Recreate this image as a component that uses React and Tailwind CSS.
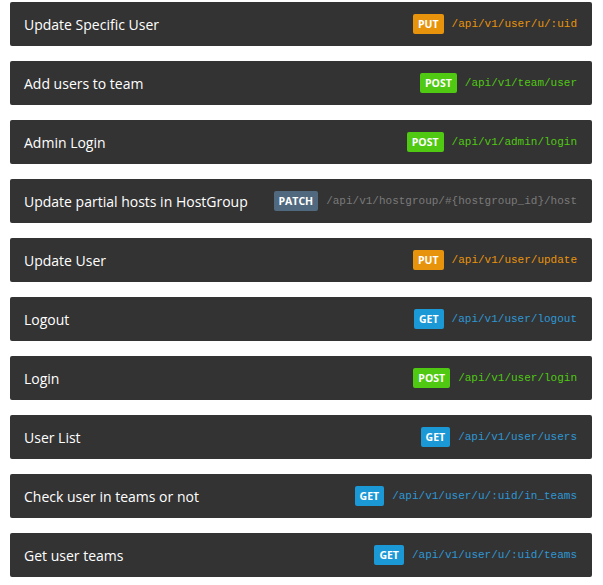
import React from "react";

const rows = [
  ["Update Specific User", "PUT", "/api/v1/user/u/:uid"],
  ["Add users to team", "POST", "/api/v1/team/user"],
  ["Admin Login", "POST", "/api/v1/admin/login"],
  ["Update partial hosts in HostGroup", "PATCH", "/api/v1/hostgroup/#{hostgroup_id}/host"],
  ["Update User", "PUT", "/api/v1/user/update"],
  ["Logout", "GET", "/api/v1/user/logout"],
  ["Login", "POST", "/api/v1/user/login"],
  ["User List", "GET", "/api/v1/user/users"],
  ["Check user in teams or not", "GET", "/api/v1/user/u/:uid/in_teams"],
  ["Get user teams", "GET", "/api/v1/user/u/:uid/teams"],
];

const badge = {
  PUT: "bg-[#e8930c]",
  POST: "bg-[#4fc912]",
  GET: "bg-[#1b98d6]",
  PATCH: "bg-[#50697e]",
};
const pathColor = {
  PUT: "text-[#e8930c]",
  POST: "text-[#4fc912]",
  GET: "text-[#2e97d5]",
  PATCH: "text-[#7a7a7a]",
};

export default function App() {
  return (
    <div className="bg-white w-[603px] h-[585px] pt-[2px] px-[10px] flex flex-col gap-[15px] font-['Open_Sans',sans-serif]">
      {rows.map(([title, method, path]) => (
        <div
          key={title}
          className="h-[44px] w-[582px] bg-[#333333] rounded-[2px] flex items-center pl-[14px] pr-[15px]"
        >
          <span className="text-white text-[14px] flex-1 whitespace-nowrap">{title}</span>
          <span
            className={`${badge[method]} text-white font-bold text-[10.5px] leading-[20px] h-[20px] px-[5px] rounded-[2px] font-['Open_Sans',sans-serif]`}
          >
            {method}
          </span>
          <span
            className={`${pathColor[method]} ml-[8px] text-[11px] font-['Liberation_Mono',monospace] whitespace-nowrap`}
          >
            {path}
          </span>
        </div>
      ))}
    </div>
  );
}
